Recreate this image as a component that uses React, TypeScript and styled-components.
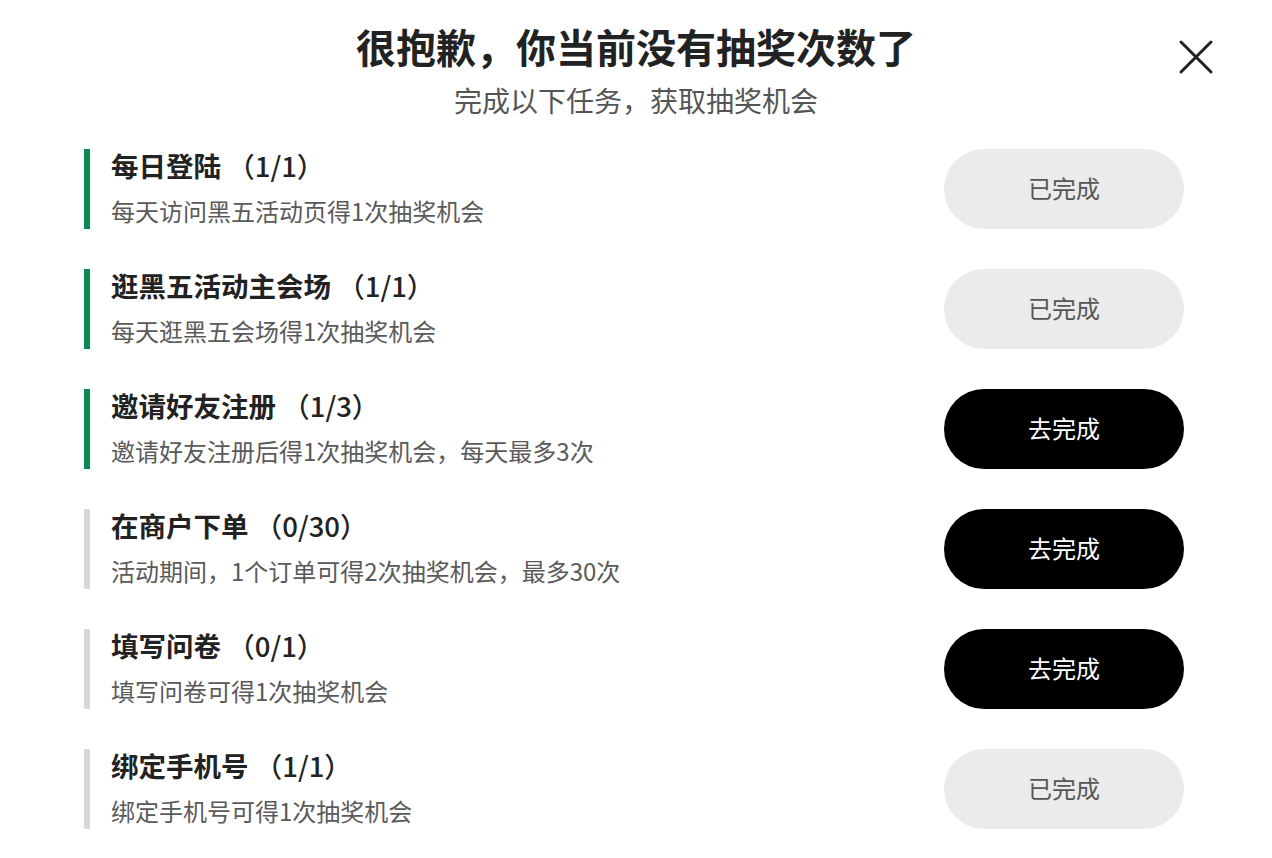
import styled, { createGlobalStyle } from 'styled-components';

type Task = {
  title: string;
  progress: string;
  desc: string;
  done: boolean;
  active: boolean;
};

const tasks: Task[] = [
  { title: '每日登陆', progress: '（1/1）', desc: '每天访问黑五活动页得1次抽奖机会', done: true, active: true },
  { title: '逛黑五活动主会场', progress: '（1/1）', desc: '每天逛黑五会场得1次抽奖机会', done: true, active: true },
  { title: '邀请好友注册', progress: '（1/3）', desc: '邀请好友注册后得1次抽奖机会，每天最多3次', done: false, active: true },
  { title: '在商户下单', progress: '（0/30）', desc: '活动期间，1个订单可得2次抽奖机会，最多30次', done: false, active: false },
  { title: '填写问卷', progress: '（0/1）', desc: '填写问卷可得1次抽奖机会', done: false, active: false },
  { title: '绑定手机号', progress: '（1/1）', desc: '绑定手机号可得1次抽奖机会', done: true, active: false },
];

const GlobalStyle = createGlobalStyle`
  html, body {
    margin: 0;
    padding: 0;
    background: #fff;
  }
  body {
    font-family: "Noto Sans CJK SC", "Noto Sans", sans-serif;
    color: #222;
  }
`;

const App = () => {
  return (
    <Page>
      <GlobalStyle />
      <Header>
        <Title>很抱歉，你当前没有抽奖次数了</Title>
        <Subtitle>完成以下任务，获取抽奖机会</Subtitle>
        <CloseButton aria-label="关闭">
          <svg width="36" height="36" viewBox="0 0 36 36" fill="none">
            <path d="M3 3L33 33M33 3L3 33" stroke="#222" strokeWidth="3" strokeLinecap="round" />
          </svg>
        </CloseButton>
      </Header>
      <TaskList>
        {tasks.map((task) => (
          <TaskRow key={task.title}>
            <TaskInfo $active={task.active}>
              <TaskTitle>
                {task.title} <Progress>{task.progress}</Progress>
              </TaskTitle>
              <TaskDesc>{task.desc}</TaskDesc>
            </TaskInfo>
            <ActionButton $done={task.done}>{task.done ? '已完成' : '去完成'}</ActionButton>
          </TaskRow>
        ))}
      </TaskList>
    </Page>
  );
};

const Page = styled.div`
  width: 1272px;
  height: 858px;
  box-sizing: border-box;
  padding: 18px 88px 0 84px;
  overflow: hidden;
`;

const Header = styled.header`
  position: relative;
  display: flex;
  flex-direction: column;
  align-items: center;
  margin-left: -84px;
  margin-right: -88px;
`;

const Title = styled.h1`
  margin: 0;
  font-size: 40px;
  line-height: 56px;
  font-weight: 700;
  color: #222;
`;

const Subtitle = styled.p`
  margin: 6px 0 0;
  font-size: 28px;
  line-height: 40px;
  color: #555;
`;

const CloseButton = styled.button`
  position: absolute;
  top: 21px;
  right: 58px;
  width: 36px;
  height: 36px;
  padding: 0;
  border: 0;
  background: none;
  cursor: pointer;
  display: flex;
`;

const TaskList = styled.ul`
  list-style: none;
  margin: 29px 0 0;
  padding: 0;
  display: flex;
  flex-direction: column;
  gap: 40px;
`;

const TaskRow = styled.li`
  display: flex;
  justify-content: space-between;
  align-items: center;
  height: 80px;
`;

const TaskInfo = styled.div<{ $active: boolean }>`
  height: 80px;
  box-sizing: border-box;
  border-left: 6px solid ${(p) => (p.$active ? '#0a8a55' : '#d9d9d9')};
  padding-left: 21px;
  display: flex;
  flex-direction: column;
`;

const TaskTitle = styled.h2`
  margin: 0 0 12px;
  font-size: 27.5px;
  line-height: 32px;
  font-weight: 700;
  color: #222;
`;

const Progress = styled.span`
  font-weight: 500;
`;

const TaskDesc = styled.p`
  margin: 0;
  font-size: 24px;
  line-height: 36px;
  color: #5a5a5a;
`;

const ActionButton = styled.button<{ $done: boolean }>`
  width: 240px;
  height: 80px;
  padding: 0 0 4px;
  border: 0;
  border-radius: 40px;
  font-family: inherit;
  font-size: 24px;
  background: ${(p) => (p.$done ? '#ebebeb' : '#000')};
  color: ${(p) => (p.$done ? '#555' : '#fff')};
  cursor: pointer;
`;

export default App;
